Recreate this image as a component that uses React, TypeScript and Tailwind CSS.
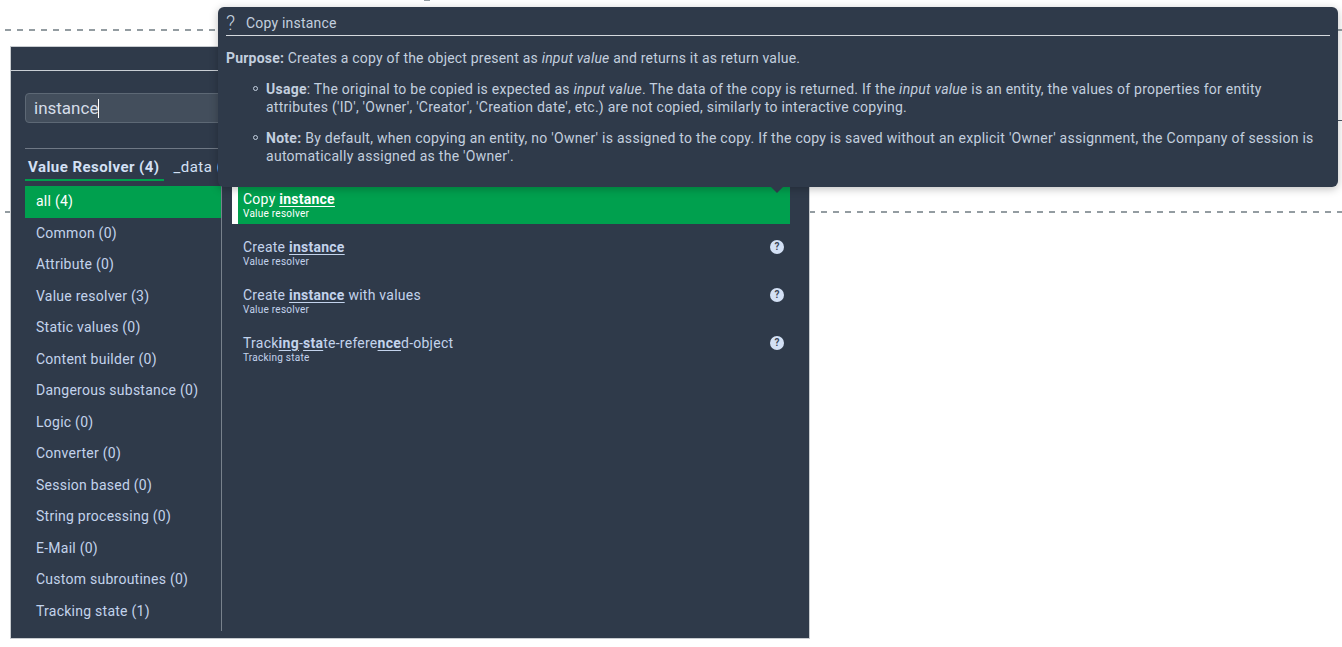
import React from 'react';

const categories = [
  'Common (0)',
  'Attribute (0)',
  'Value resolver (3)',
  'Static values (0)',
  'Content builder (0)',
  'Dangerous substance (0)',
  'Logic (0)',
  'Converter (0)',
  'Session based (0)',
  'String processing (0)',
  'E-Mail (0)',
  'Custom subroutines (0)',
  'Tracking state (1)',
];

function Hit({ children }: { children: React.ReactNode }) {
  return <span className="font-bold underline underline-offset-2">{children}</span>;
}

function HelpDot() {
  return (
    <span className="flex h-[14px] w-[14px] items-center justify-center rounded-full bg-[#d3e0f5] text-[10px] font-bold leading-none tracking-normal text-[#3b4657]">
      ?
    </span>
  );
}

function ResultRow({ title, sub }: { title: React.ReactNode; sub: string }) {
  return (
    <div className="flex h-12 items-start justify-between pl-[11px] pr-[6px] pt-[15px] text-[#c3d3ec]">
      <div>
        <div className="text-sm leading-4">{title}</div>
        <div className="mt-[1px] text-[10px] leading-[12px]">{sub}</div>
      </div>
      <div className="pt-[1px]">
        <HelpDot />
      </div>
    </div>
  );
}

export default function App() {
  return (
    <div
      className="relative h-[647px] w-[1342px] overflow-hidden bg-white pl-[5px] pt-[29px] tracking-[0.25px]"
      style={{ fontFamily: 'Roboto, sans-serif' }}
    >
      <div className="h-[2px] bg-[repeating-linear-gradient(90deg,#939ca1_0_6px,transparent_6px_12px)]" />
      <div className="mt-[89px] ml-[1300px] h-px bg-[#4a5360]" />
      <div className="mt-[90px] h-[2px] bg-[repeating-linear-gradient(90deg,#939ca1_0_6px,transparent_6px_12px)]" />
      <div className="absolute left-[424px] top-0 h-[1px] w-[6px] bg-[#939ca1]" />

      {/* picker dialog */}
      <div className="absolute left-[10px] top-[46px] flex h-[593px] w-[800px] flex-col border border-[#c8ccd0] bg-[#2f3a4a]">
        <div className="h-[24px] shrink-0 border-b border-[#c9ced4]" />
        <div className="px-[14px] pt-[22px]">
          <div className="flex h-[30px] w-[400px] items-center rounded-[4px] border border-[#5d6875] bg-[#434e5c] pl-2 pt-[1px] text-[17px] tracking-normal text-[#d5dde8]">
            instance
            <span className="h-[19px] w-px bg-white" />
          </div>
          <div className="mt-[25px] flex h-[32px] border-t border-[#6f7885] pt-[7px] text-[15px] tracking-[0.45px]">
            <div className="h-[25px] border-b-2 border-[#00a04e] pl-[3px] pr-1 font-bold text-[#d3e0f5]">
              Value Resolver (4)
            </div>
            <div className="ml-[10px] text-[#d3e0f5]">_data (0)</div>
          </div>
        </div>
        <div className="ml-[14px] mt-[6px] flex min-h-0 flex-1 pb-[7px]">
          <div className="w-[197px] shrink-0 border-r border-[#78818c] text-sm text-[#c3d3ec]">
            <div className="flex h-[32px] items-center bg-[#00a04e] pb-[2px] pl-[11px] text-white">all (4)</div>
            <div className="-mt-[1px]">
              {categories.map((c) => (
                <div key={c} className="flex h-[31.5px] items-center pl-[11px]">
                  {c}
                </div>
              ))}
            </div>
          </div>
          <div className="-mt-[10px] w-[568px] shrink-0 pl-[10px]">
            <div className="flex h-12 border-l-[6px] border-white bg-[#00a04e] pl-[5px] pt-[15px] text-white">
              <div>
                <div className="text-sm leading-4">
                  Copy <Hit>instance</Hit>
                </div>
                <div className="mt-[1px] text-[10px] leading-[12px]">Value resolver</div>
              </div>
            </div>
            <ResultRow
              title={
                <>
                  Create <Hit>instance</Hit>
                </>
              }
              sub="Value resolver"
            />
            <ResultRow
              title={
                <>
                  Create <Hit>instance</Hit> with values
                </>
              }
              sub="Value resolver"
            />
            <ResultRow
              title={
                <>
                  Track<Hit>ing</Hit>-<Hit>sta</Hit>te-refere<Hit>nce</Hit>d-object
                </>
              }
              sub="Tracking state"
            />
          </div>
        </div>
      </div>

      {/* help tooltip */}
      <div className="absolute left-[218px] top-[7px] h-[180px] w-[1120px] rounded-[6px] bg-[#2f3a4a] px-2 text-sm tracking-[0.2px] text-[#c3cfdf] shadow-[0_2px_8px_rgba(0,0,0,0.25)]">
        <div className="flex h-[29px] items-end border-b border-[#d5d9de] pb-[2px]">
          <span className="w-[20px] text-[20px] font-light leading-[20px]">?</span>
          <span className="leading-[20px]">Copy instance</span>
        </div>
        <p className="mt-[13px] leading-[18px]">
          <b>Purpose:</b> Creates a copy of the object present as <i>input value</i> and returns it as return value.
        </p>
        <div className="mt-[13px] pl-10 pr-[10px] leading-[18px]">
          <p className="relative tracking-[0.25px]">
            <span className="absolute -left-[13px] top-[6px] h-[5px] w-[5px] rounded-full border border-[#c3cfdf]" />
            <b>Usage</b>: The original to be copied is expected as <i>input value</i>. The data of the copy is returned. If the <i>input value</i> is an entity, the values of properties for entity attributes ('ID', 'Owner', 'Creator', 'Creation date', etc.) are not copied, similarly to interactive copying.
          </p>
          <p className="relative mt-[13px] tracking-[0.275px]">
            <span className="absolute -left-[13px] top-[6px] h-[5px] w-[5px] rounded-full border border-[#c3cfdf]" />
            <b>Note:</b> By default, when copying an entity, no 'Owner' is assigned to the copy. If the copy is saved without an explicit 'Owner' assignment, the Company of session is automatically assigned as the 'Owner'.
          </p>
        </div>
        <div className="absolute left-[553px] top-[180px] h-0 w-0 border-x-[6px] border-t-[6px] border-x-transparent border-t-[#2f3a4a]" />
      </div>
    </div>
  );
}
